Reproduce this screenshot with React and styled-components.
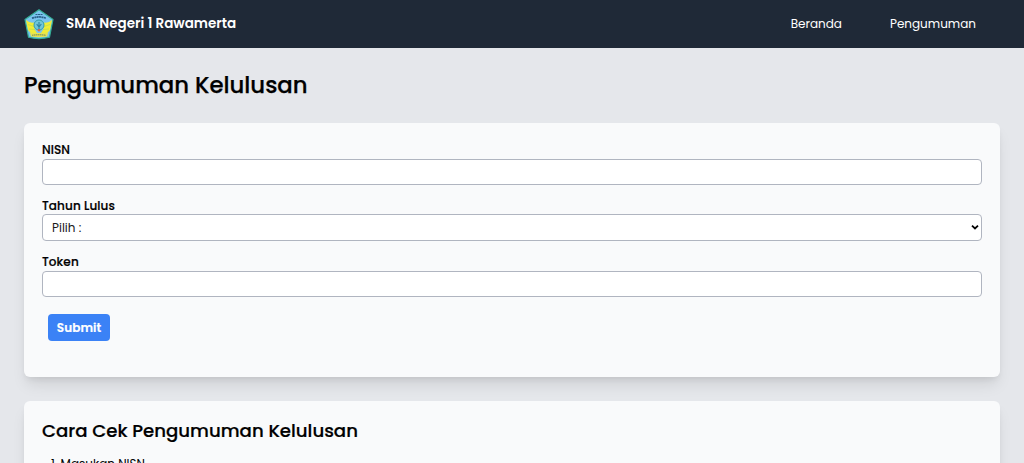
import React from "react";
import styled, { createGlobalStyle } from "styled-components";

const GlobalStyle = createGlobalStyle`
  *, *::before, *::after { box-sizing: border-box; }
  html, body { margin: 0; height: 463px; overflow: hidden; }
  body {
    background: #e5e7eb;
    color: #000;
    font-family: Poppins, Inter, "Liberation Sans", sans-serif;
    font-size: 12px;
  }
`;

const Header = styled.header`
  display: flex;
  align-items: center;
  justify-content: space-between;
  height: 48px;
  padding: 0 48px 0 24px;
  background: #1f2937;
  color: #fff;
`;

const Brand = styled.div`
  display: flex;
  align-items: center;
  gap: 12px;
  font-size: 13.5px;
  font-weight: 600;
  white-space: nowrap;
`;

const Nav = styled.nav`
  display: flex;
  gap: 48px;
`;

const NavLink = styled.a`
  color: #fff;
  font-size: 12px;
  white-space: nowrap;
`;

const Main = styled.main`
  height: 415px;
  padding: 19px 24px 0;
  overflow: hidden;
`;

const PageTitle = styled.h1`
  margin: 0 0 20px;
  font-size: 22.8px;
  line-height: 36px;
  font-weight: 500;
  -webkit-text-stroke: 0.25px #000;
`;

const Card = styled.section`
  height: ${(p) => p.$height};
  margin-bottom: 24px;
  padding: 18px;
  border-radius: 6px;
  background: #f9fafb;
  box-shadow: 0 10px 15px -3px rgba(0, 0, 0, 0.1), 0 4px 6px -2px rgba(0, 0, 0, 0.07);
`;

const Field = styled.div`
  display: flex;
  flex-direction: column;
  margin-bottom: ${(p) => p.$gap};
`;

const Label = styled.label`
  height: ${(p) => p.$height || "18px"};
  line-height: 18px;
  font-size: 12px;
  font-weight: 500;
  letter-spacing: 0.1px;
  -webkit-text-stroke: 0.2px #000;
`;

const Input = styled.input`
  width: 100%;
  height: 26px;
  padding: 0 8px;
  border: 1px solid #b0b5c0;
  border-radius: 4px;
  background: #fff;
  font: inherit;
`;

const SelectBox = styled.div`
  position: relative;
  display: flex;
`;

const Select = styled.select`
  appearance: none;
  width: 100%;
  height: 27px;
  padding: 0 20px 0 9px;
  border: 1px solid #b0b5c0;
  border-radius: 4px;
  background: #fff;
  color: #1a1a1a;
  font: inherit;
`;

const Chevron = styled.svg`
  position: absolute;
  right: 3px;
  top: 10px;
  pointer-events: none;
`;

const Submit = styled.button`
  width: 62px;
  height: 27px;
  margin-left: 6px;
  padding: 0;
  border: 0;
  border-radius: 4px;
  background: #3b82f6;
  color: #fff;
  font: inherit;
  font-weight: 600;
  letter-spacing: 0.1px;
  -webkit-text-stroke: 0.2px #fff;
`;

const CardTitle = styled.h2`
  margin: 0;
  font-size: 18.15px;
  line-height: 24px;
  font-weight: 500;
  -webkit-text-stroke: 0.2px #000;
`;

const Steps = styled.ol`
  margin: 12px 0 0;
  padding: 0 0 0 9px;
  list-style-position: inside;
  line-height: 18px;
`;

function Crest() {
  return (
    <svg width="30" height="31" viewBox="0 0 30 31" aria-hidden="true">
      <path d="M15 .8 29 10.5 25.5 28.2Q15 31 4.5 28.2L1 10.5Z" fill="#79c4ee" stroke="#35ae96" strokeWidth="1.2" strokeLinejoin="round" />
      <path d="M2 11Q6 14.5 10 13.5L10.5 20 13 24H17L19.5 20 20 13.5Q24 14.5 28 11L26 21 22 25.5H8L4 21Z" fill="#f0ed36" />
      <path d="M4 15.5 10 17.5M5 20 11 20.5M26 15.5 20 17.5M25 20 19 20.5" stroke="#b6da55" strokeWidth=".7" />
      <circle cx="15" cy="16" r="5" fill="#70c6db" stroke="#359ea8" strokeWidth="1" />
      <path d="M15 13v8M12.7 15l2.3 3 2.3-3" fill="none" stroke="#2b829e" strokeWidth="1.1" />
      <circle cx="15" cy="21.2" r="1.2" fill="#dc654e" />
      <path d="M11.5 5.5H18.5" stroke="#285f86" strokeWidth="1.2" strokeDasharray="2 .5" />
      <path d="M8 9.3Q15 6.5 22 9.3" fill="none" stroke="#285f86" strokeWidth="1.7" strokeDasharray="2 .4" />
      <path d="M6 24H24L23 27.6Q15 29 7 27.6Z" fill="#e5e451" />
      <path d="M8 26.3Q15 25.3 22 26.3" fill="none" stroke="#607d63" strokeWidth="1" strokeDasharray="1.5 .5" />
    </svg>
  );
}

export default function App() {
  return (
    <>
      <GlobalStyle />
      <Header>
        <Brand><Crest /><span>SMA Negeri 1 Rawamerta</span></Brand>
        <Nav>
          <NavLink>Beranda</NavLink>
          <NavLink>Pengumuman</NavLink>
        </Nav>
      </Header>
      <Main>
        <PageTitle>Pengumuman Kelulusan</PageTitle>
        <Card $height="254.4px">
          <Field $gap="11.5px"><Label htmlFor="nisn">NISN</Label><Input id="nisn" /></Field>
          <Field $gap="12px">
            <Label htmlFor="year" $height="17.5px">Tahun Lulus</Label>
            <SelectBox>
              <Select id="year"><option>Pilih :</option></Select>
              <Chevron width="8" height="7" viewBox="0 0 8 7" aria-hidden="true">
                <path d="m1 1.7 3 2.8 3-2.8" fill="none" stroke="#000" strokeWidth="1.8" />
              </Chevron>
            </SelectBox>
          </Field>
          <Field $gap="17px"><Label htmlFor="token">Token</Label><Input id="token" /></Field>
          <Submit type="button">Submit</Submit>
        </Card>
        <Card $height="160px">
          <CardTitle>Cara Cek Pengumuman Kelulusan</CardTitle>
          <Steps><li>Masukan NISN</li></Steps>
        </Card>
      </Main>
    </>
  );
}
